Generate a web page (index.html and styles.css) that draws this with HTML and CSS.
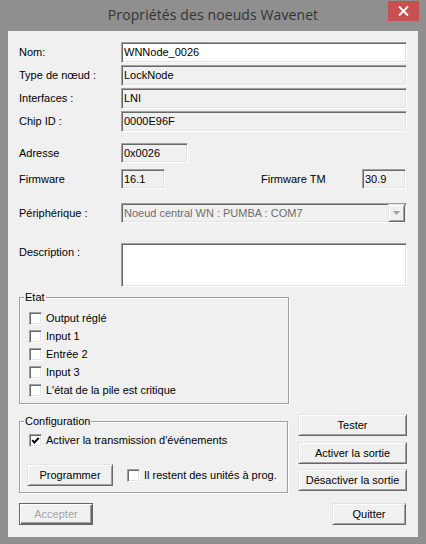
FILE: index.html
```html
<!DOCTYPE html>
<html lang="fr">
<head>
<meta charset="utf-8">
<title>Propriétés des noeuds Wavenet</title>
<link rel="stylesheet" href="styles.css">
</head>
<body>
<div class="window">
  <div class="titlebar">
    <div></div>
    <div class="title">Propriétés des noeuds Wavenet</div>
    <div class="close">
      <svg width="31" height="20" viewBox="0 0 31 20"><path d="M11 5.5 L20 14.5 M20 5.5 L11 14.5" stroke="#fff" stroke-width="1.8" fill="none"/></svg>
    </div>
  </div>
  <div class="client">
    <div class="row r-first">
      <div class="label">Nom:</div>
      <div class="field white">WNNode_0026</div>
    </div>
    <div class="row r-tight">
      <div class="label">Type de nœud :</div>
      <div class="field">LockNode</div>
    </div>
    <div class="row r-tight">
      <div class="label">Interfaces :</div>
      <div class="field">LNI</div>
    </div>
    <div class="row r-tight">
      <div class="label">Chip ID :</div>
      <div class="field">0000E96F</div>
    </div>

    <div class="row r-addr">
      <div class="label">Adresse</div>
      <div class="field short addr">0x0026</div>
    </div>
    <div class="row r-fw">
      <div class="label">Firmware</div>
      <div class="field short fw">16.1</div>
      <div class="label-tm">Firmware TM</div>
      <div class="field short fw">30.9</div>
    </div>

    <div class="row r-combo">
      <div class="label">Périphérique :</div>
      <div class="field combo">
        <span class="combo-text">Noeud central WN : PUMBA : COM7</span>
        <span class="combo-btn">
          <svg width="7" height="4" viewBox="0 0 7 4"><path d="M0 0 H7 L3.5 4 Z" fill="#a0a0a0"/></svg>
        </span>
      </div>
    </div>

    <div class="row r-desc">
      <div class="label label-top">Description :</div>
      <div class="field white desc"></div>
    </div>

    <div class="group etat">
      <div class="gtitle">Etat</div>
      <div class="checks">
        <div class="check"><span class="box"></span><span>Output réglé</span></div>
        <div class="check"><span class="box"></span><span>Input 1</span></div>
        <div class="check"><span class="box"></span><span>Entrée 2</span></div>
        <div class="check"><span class="box"></span><span>Input 3</span></div>
        <div class="check"><span class="box"></span><span>L'état de la pile est critique</span></div>
      </div>
    </div>

    <div class="lower">
      <div class="group config">
        <div class="gtitle">Configuration</div>
        <div class="checks checks-config">
          <div class="check"><span class="box"><svg width="9" height="9" viewBox="0 0 9 9"><path d="M1.2 4.2 L3.4 6.5 L7.8 1.8" stroke="#000" stroke-width="1.9" fill="none"/></svg></span><span>Activer la transmission d'événements</span></div>
        </div>
        <div class="prog-row">
          <div class="btn prog">Programmer</div>
          <div class="check check-inline"><span class="box"></span><span>Il restent des unités à prog.</span></div>
        </div>
      </div>
      <div class="actions">
        <div class="btn">Tester</div>
        <div class="btn a2">Activer la sortie</div>
        <div class="btn a3">Désactiver la sortie</div>
      </div>
    </div>

    <div class="bottom">
      <div class="btn default disabled">Accepter</div>
      <div class="btn quit">Quitter</div>
    </div>
  </div>
</div>
</body>
</html>
```

FILE: styles.css
```css
html, body {
  margin: 0;
  padding: 0;
}
body {
  font-family: "Liberation Sans", Arial, sans-serif;
  font-size: 11px;
  color: #000;
}
.window {
  width: 426px;
  height: 544px;
  box-sizing: border-box;
  background: #8f8f8f;
  padding: 0 8px 8px;
  display: flex;
  flex-direction: column;
}
.titlebar {
  height: 31px;
  flex: none;
  display: grid;
  grid-template-columns: 1fr auto 1fr;
  margin: 0 -1px;
}
.title {
  font-family: "Open Sans", "Noto Sans", sans-serif;
  font-size: 14px;
  letter-spacing: 0.1px;
  line-height: 30px;
  color: #333;
  white-space: nowrap;
}
.close {
  justify-self: end;
  align-self: start;
  margin-top: 1px;
  width: 31px;
  height: 20px;
  background: #c75050;
}
.close svg {
  display: block;
}
.client {
  flex: 1;
  background: #f0f0f0;
  padding: 11px 11px 12px;
  display: flex;
  flex-direction: column;
}
.row {
  display: flex;
  align-items: center;
}
.r-tight { margin-top: 2px; }
.r-addr { margin-top: 11px; }
.r-fw { margin-top: 6px; }
.r-combo { margin-top: 14px; }
.r-desc { margin-top: 20px; align-items: flex-start; }
.label {
  width: 102px;
  flex: none;
  line-height: 13px;
  white-space: nowrap;
}
.label-top {
  padding-top: 3px;
}
.field {
  box-sizing: border-box;
  flex: 1;
  height: 21px;
  border: 1px solid;
  border-color: #a0a0a0 #fff #fff #a0a0a0;
  box-shadow: inset 1px 1px 0 #696969, inset -1px -1px 0 #e3e3e3;
  background: #f0f0f0;
  padding: 0 2px;
  line-height: 19px;
  white-space: nowrap;
  overflow: hidden;
}
.white {
  background: #fff;
}
.short {
  flex: none;
  height: 20px;
  line-height: 18px;
}
.addr { width: 67px; }
.fw { width: 44px; }
.label-tm {
  margin-left: 96px;
  width: 101px;
  line-height: 13px;
}
.combo {
  height: 20px;
  display: flex;
  align-items: center;
  padding: 0 1px 0 2px;
  line-height: 18px;
}
.combo-text {
  flex: 1;
  color: #6d6d6d;
}
.combo-btn {
  box-sizing: border-box;
  width: 17px;
  height: 18px;
  border: 1px solid;
  border-color: #e3e3e3 #696969 #696969 #e3e3e3;
  box-shadow: inset 1px 1px 0 #fff, inset -1px -1px 0 #a0a0a0;
  background: #f0f0f0;
  display: flex;
  align-items: center;
  justify-content: center;
}
.combo-btn svg { display: block; }
.desc {
  height: 44px;
}
.group {
  box-sizing: border-box;
  border: 1px solid #a0a0a0;
  box-shadow: inset 1px 1px 0 #fff, 1px 1px 0 #fff;
  display: flex;
  flex-direction: column;
  flex: none;
}
.etat {
  margin-top: 10px;
  width: 270px;
  height: 107px;
}
.gtitle {
  align-self: flex-start;
  margin: -7px 0 0 4px;
  padding: 0 1px;
  background: #f0f0f0;
  line-height: 13px;
  white-space: nowrap;
}
.checks {
  margin-top: 5px;
  padding-left: 9px;
}
.check {
  display: flex;
  align-items: center;
  height: 18px;
  white-space: nowrap;
}
.box {
  box-sizing: border-box;
  width: 13px;
  height: 13px;
  flex: none;
  margin-right: 4px;
  border: 1px solid;
  border-color: #a0a0a0 #fff #fff #a0a0a0;
  box-shadow: inset 1px 1px 0 #696969, inset -1px -1px 0 #e3e3e3;
  background: #fff;
  display: flex;
  align-items: center;
  justify-content: center;
}
.box svg { display: block; }
.lower {
  display: flex;
  margin-top: 10px;
}
.config {
  margin-top: 7px;
  width: 269px;
  height: 72px;
}
.checks-config {
  margin-top: 3px;
}
.prog-row {
  display: flex;
  align-items: center;
  margin-top: 15px;
  padding-left: 7px;
}
.check-inline {
  margin-left: 14px;
}
.actions {
  margin-left: auto;
  width: 109px;
  display: flex;
  flex-direction: column;
}
.btn {
  box-sizing: border-box;
  height: 22px;
  border: 1px solid;
  border-color: #e3e3e3 #696969 #696969 #e3e3e3;
  box-shadow: inset 1px 1px 0 #fff, inset -1px -1px 0 #a0a0a0;
  background: #f0f0f0;
  text-align: center;
  line-height: 20px;
  white-space: nowrap;
}
.a2 { margin-top: 6px; }
.a3 { margin-top: 5px; }
.prog {
  width: 86px;
  flex: none;
}
.bottom {
  display: flex;
  justify-content: space-between;
  margin-top: 10px;
}
.default {
  width: 74px;
  border-color: #646464;
  box-shadow: inset 1px 1px 0 #fff, inset -1px -1px 0 #696969, inset -2px -2px 0 #a0a0a0;
}
.disabled {
  color: #a0a0a0;
  text-shadow: 1px 1px 0 #fff;
}
.quit {
  width: 74px;
  margin-right: 1px;
}
```
